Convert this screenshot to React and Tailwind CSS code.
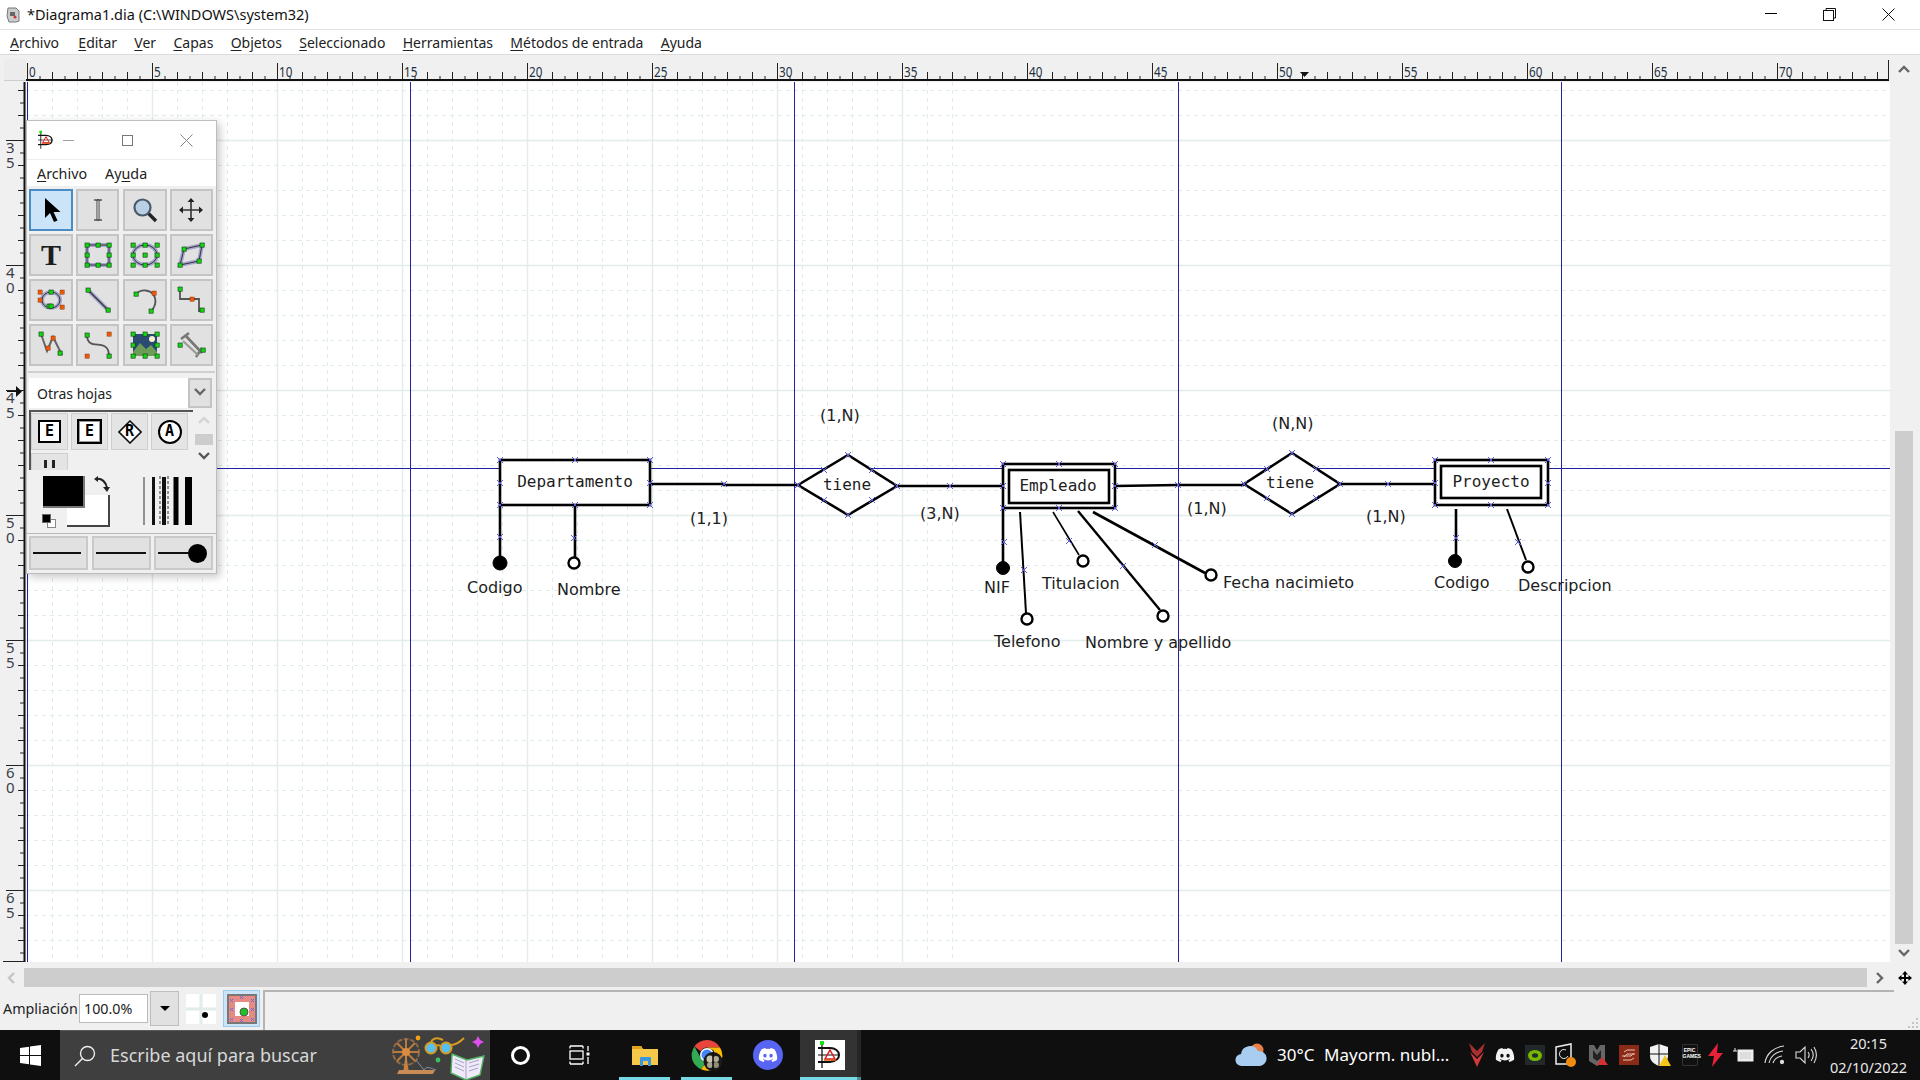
import React from "react";
import { FaDiscord } from "react-icons/fa";

const UI = "font-['Noto_Sans','Open_Sans',sans-serif]";
const U = ({ children }) => <span className="underline underline-offset-2">{children}</span>;

const range = (n, f) => Array.from({ length: n }, (_, i) => f(i));

function TopRuler() {
  return (
    <svg className="block" width="1864" height="23" viewBox="26 59 1864 23">
      {range(150, (i) => {
        const x = 27.5 + i * 12.5;
        if (x > 1888) return null;
        const top = i % 10 === 0 ? 63 : i % 2 === 0 ? 72 : 76;
        return <line key={i} x1={x} x2={x} y1={top} y2={80} stroke="#222" strokeWidth="1" />;
      })}
      <line x1="26" x2="1889" y1="80" y2="80" stroke="#111" strokeWidth="2" />
      <line x1="1888.5" x2="1888.5" y1="60" y2="80" stroke="#222" strokeWidth="1" />
      {range(15, (i) => {
        const s = String(i * 5);
        return (
          <text key={i} x={29 + i * 125} y={77} fontFamily="'Noto Sans',sans-serif" fontSize="15" fill="#23303f" textLength={s.length * 6.7} lengthAdjust="spacingAndGlyphs">
            {s}
          </text>
        );
      })}
      <path d="M1300 72h9l-4.500 5z" fill="#111" />
    </svg>
  );
}

function LeftRuler() {
  const labels = [["3", "5", 140], ["4", "0", 265], ["4", "5", 390], ["5", "0", 515], ["5", "5", 640], ["6", "0", 765], ["6", "5", 890]];
  return (
    <svg className="block" width="26" height="880" viewBox="0 82 26 880">
      <line x1="24.5" x2="24.5" y1="82" y2="962" stroke="#111" strokeWidth="2" />
      {range(72, (i) => {
        const y = 90 + i * 12.5;
        if (y > 961) return null;
        const major = Math.abs((y - 15) % 125) < 0.01;
        const even = i % 2 === 0;
        return <line key={i} x1={major ? 6 : even ? 18 : 20} x2={24} y1={y + 0.5} y2={y + 0.5} stroke="#222" strokeWidth="1" />;
      })}
      {labels.map(([a, b, y]) => (
        <g key={y} fontFamily="'Noto Sans',sans-serif" fontSize="15" fill="#3a3f4a">
          <text x="6" y={y + 13}>{a}</text>
          <text x="6" y={y + 28}>{b}</text>
        </g>
      ))}
      <path d="M7 391.5h10" stroke="#111" />
      <path d="M16 386l6 5.500-6 5.500z" fill="#111" />
      <line x1="3" x2="24" y1="961.5" y2="961.5" stroke="#222" />
    </svg>
  );
}

const X = ({ x, y }) => (
  <path d={`M${x - 3} ${y - 3}l6 6M${x + 3} ${y - 3}l-6 6`} stroke="#5a5ad8" strokeWidth="1" fill="none" />
);

function Diagram() {
  const marks = [[500,460],[575,460],[650,460],[500,483],[650,483],[500,505],[575,505],[650,505],[500,537],[574,538],[724,484],[798,485],[848,455],[824,470],[872,470],[897,486],[824,500],[872,500],[848,515],[950,486],
    [1003,464],[1059,464],[1115,464],[1003,486],[1115,486],[1003,508],[1059,508],[1115,508],[1178,485],[1244,484],[1292,453],[1267,469],[1316,469],[1340,484],[1267,498],[1316,498],[1292,514],[1388,484],
    [1435,460],[1491,460],[1548,460],[1435,483],[1548,483],[1435,505],[1491,505],[1548,505],[1004,542],[1024,570],[1069,541],[1123,566],[1155,545],[1456,538],[1518,542]];
  const texts = [
    ["(1,N)", 820, 421],["(1,1)", 690, 524],["(3,N)", 920, 519],["Codigo", 467, 593],["Nombre", 557, 595],
    ["NIF", 984, 593],["Titulacion", 1042, 589],["Fecha nacimieto", 1223, 588],["Telefono", 994, 647],["Nombre y apellido", 1085, 648],
    ["Codigo", 1434, 588],["Descripcion", 1518, 591],["(N,N)", 1272, 429],["(1,N)", 1187, 514],["(1,N)", 1366, 522],
  ];
  const mono = [["Departamento", 575, 487],["tiene", 847, 490],["Empleado", 1058, 491],["tiene", 1290, 488],["Proyecto", 1491, 487]];
  return (
    <svg className="block bg-white" width="1864" height="880" viewBox="26 82 1864 880">
      {range(38, (i) => {
        const x = 27.5 + i * 25;
        const major = i % 5 === 0;
        return <line key={"v" + i} x1={x} x2={x} y1="82" y2="962" stroke={major ? "#e2ecea" : "#e0ece8"} strokeWidth={major ? 1.4 : 1} strokeDasharray={major ? undefined : "4 4"} />;
      })}
      {range(36, (i) => {
        const y = 90.5 + i * 25;
        const major = i % 5 === 2;
        return <line key={"h" + i} x1="26" x2="1890" y1={y} y2={y} stroke={major ? "#e2ecea" : "#e0ece8"} strokeWidth={major ? 1.4 : 1} strokeDasharray={major ? undefined : "4 4"} />;
      })}
      <g stroke="#22229e" strokeWidth="1">
        <line x1="27.5" x2="27.5" y1="82" y2="962" />
        <line x1="410.5" x2="410.5" y1="82" y2="962" />
        <line x1="794.5" x2="794.5" y1="82" y2="962" />
        <line x1="1178.5" x2="1178.5" y1="82" y2="962" />
        <line x1="1561.5" x2="1561.5" y1="82" y2="962" />
        <line x1="26" x2="1890" y1="468.5" y2="468.5" />
      </g>
      <g fill="none" stroke="#000" strokeWidth="2.6">
        <rect x="500" y="460" width="150" height="45" fill="#fff" />
        <path d="M650 484h74v1h74" />
        <path d="M798 485l50-30 49 31-49 29z" fill="#fff" />
        <path d="M897 486h106" />
        <rect x="1003" y="464" width="112" height="44" fill="#fff" />
        <rect x="1009" y="470" width="100" height="33" fill="#fff" />
        <path d="M1115 486l63-1h66" />
        <path d="M1244 484l48-31 48 31-48 30z" fill="#fff" />
        <path d="M1340 484h95" />
        <rect x="1435" y="460" width="113" height="45" fill="#fff" />
        <rect x="1441" y="466" width="100" height="32" fill="#fff" />
        <path d="M500 505v55M575 505v52" />
        <path d="M1003 508v55" />
        <path d="M1020 512l6 101" strokeWidth="2" />
        <path d="M1053 512l26 43" strokeWidth="1.6" />
        <path d="M1078 511l82 99" strokeWidth="2.4" />
        <path d="M1093 512l112 61" />
        <path d="M1456 509v47" />
        <path d="M1507 509l19 51" strokeWidth="2" />
      </g>
      <g fill="#000" stroke="#000">
        <circle cx="500" cy="563" r="7" />
        <circle cx="1003" cy="568" r="6.5" />
        <circle cx="1455" cy="561" r="6.5" />
      </g>
      <g fill="#fff" stroke="#000" strokeWidth="2.4">
        <circle cx="574" cy="563" r="5.5" />
        <circle cx="1027" cy="619" r="5.5" />
        <circle cx="1083" cy="561" r="5.5" />
        <circle cx="1163" cy="616" r="5.5" />
        <circle cx="1211" cy="575" r="5.5" />
        <circle cx="1528" cy="567" r="5.5" />
      </g>
      {marks.map(([x, y], i) => <X key={i} x={x} y={y} />)}
      <g fontFamily="'DejaVu Sans',sans-serif" fontSize="16" fill="#1d1d1d">
        {texts.map(([t, x, y], i) => <text key={i} x={x} y={y}>{t}</text>)}
      </g>
      <g fontFamily="'DejaVu Sans Mono',monospace" fontSize="16" fill="#1d1d1d" textAnchor="middle">
        {mono.map(([t, x, y], i) => <text key={i} x={x} y={y}>{t}</text>)}
      </g>
    </svg>
  );
}

const G = ({ x, y, c = "#14d414" }) => <rect x={x - 2} y={y - 2} width="4.2" height="4.2" fill={c} stroke="#0a3a0a" strokeWidth="0.6" />;
const O = ({ x, y }) => <rect x={x - 2} y={y - 2} width="4.2" height="4.2" fill="#e8590c" stroke="#7a2e05" strokeWidth="0.4" />;
const Blur = ({ d }) => <path d={d} fill="none" stroke="#6a6ac0" strokeWidth="4" opacity="0.5" />;

const icons = [
  <svg width="30" height="30" viewBox="0 0 30 30"><path d="M9 3v20l5-5 4 9 3.500-1.500-4-8.500h7z" fill="#000" /></svg>,
  <svg width="30" height="30" viewBox="0 0 30 30"><path d="M11 5h8M11 25h8" stroke="#111" strokeWidth="1.2" fill="none" /><path d="M14 5h2v20h-2z" fill="#fff" stroke="#111" strokeWidth="0.8" /></svg>,
  <svg width="30" height="30" viewBox="0 0 30 30"><path d="M18 18l8 8" stroke="#222" strokeWidth="3.4" /><circle cx="12.5" cy="12.5" r="8" fill="#b9cfe6" stroke="#4a5a6a" strokeWidth="2.2" /></svg>,
  <svg width="30" height="30" viewBox="0 0 30 30"><path d="M15 6v18M6 15h18" stroke="#333" strokeWidth="1.6" /><path d="M15 3l-3.500 4h7zM15 27l-3.500-4h7zM3 15l4-3.500v7zM27 15l-4-3.500v7z" fill="#222" /></svg>,
  <span className="font-['Liberation_Serif',serif] font-bold text-[30px] leading-none text-[#1d1d1d]">T</span>,
  <svg width="30" height="30" viewBox="0 0 30 30"><Blur d="M4 5h22v20H4z" /><path d="M4 5h22v20H4z" fill="none" stroke="#333" strokeWidth="1" />{[[4,5],[15,5],[26,5],[4,15],[26,15],[4,25],[15,25],[26,25]].map(([x,y],i)=><G key={i} x={x} y={y}/>)}</svg>,
  <svg width="30" height="30" viewBox="0 0 30 30"><ellipse cx="15" cy="15" rx="12" ry="10" fill="none" stroke="#6a6ac0" strokeWidth="4" opacity="0.5"/><ellipse cx="15" cy="15" rx="12" ry="10" fill="none" stroke="#333"/>{[[3,5],[15,5],[27,5],[3,15],[15,15],[27,15],[3,25],[15,25],[27,25]].map(([x,y],i)=><G key={i} x={x} y={y}/>)}</svg>,
  <svg width="30" height="30" viewBox="0 0 30 30"><Blur d="M8 9l18-4-3 16-19 4z" /><path d="M8 9l18-4-3 16-19 4z" fill="none" stroke="#333"/>{[[8,9],[26,5],[23,21],[4,25]].map(([x,y],i)=><G key={i} x={x} y={y}/>)}</svg>,
  <svg width="30" height="30" viewBox="0 0 30 30"><ellipse cx="15" cy="15" rx="9" ry="8" fill="none" stroke="#6a6ac0" strokeWidth="4" opacity="0.5"/><ellipse cx="15" cy="15" rx="9" ry="8" fill="none" stroke="#333"/>{[[4,7],[26,7],[4,15],[26,22],[13,21]].map(([x,y],i)=> i===4?<G key={i} x={x} y={y}/>:<O key={i} x={x} y={y}/>)}<G x={15} y={7}/><G x={15} y={21}/></svg>,
  <svg width="30" height="30" viewBox="0 0 30 30"><Blur d="M5 5l20 20"/><path d="M5 5l20 20" stroke="#333" strokeWidth="1.2"/><G x={5} y={5}/><G x={25} y={25}/></svg>,
  <svg width="30" height="30" viewBox="0 0 30 30"><path d="M6 9c6-6 17-4 19 4s-3 11-3 13" fill="none" stroke="#555" strokeWidth="1.8"/><G x={6} y={9}/><O x={24} y={8}/><G x={21} y={26}/></svg>,
  <svg width="30" height="30" viewBox="0 0 30 30"><path d="M4 4v10h19v12h3" fill="none" stroke="#555" strokeWidth="1.8"/><G x={4} y={4}/><O x={16} y={14}/><G x={26} y={25}/></svg>,
  <svg width="30" height="30" viewBox="0 0 30 30"><path d="M5 4l6 17 6-14 9 18" fill="none" stroke="#666" strokeWidth="2"/><G x={5} y={4}/><O x={12} y={18}/><O x={17} y={8}/><G x={24} y={23}/></svg>,
  <svg width="30" height="30" viewBox="0 0 30 30"><path d="M4 5c0 18 22 1 22 21" fill="none" stroke="#555" strokeWidth="1.8"/><G x={4} y={5}/><O x={26} y={4}/><O x={4} y={26}/><G x={26} y={26}/></svg>,
  <svg width="30" height="30" viewBox="0 0 30 30"><rect x="3" y="4" width="24" height="22" fill="#2a4a72"/><circle cx="22" cy="9" r="3" fill="#f4f0d0"/><path d="M3 22l7-9 6 6 5-4 6 7v4H3z" fill="#6c9c58"/>{[[3,4],[15,4],[27,4],[3,15],[27,15],[3,26],[15,26],[27,26]].map(([x,y],i)=><G key={i} x={x} y={y}/>)}</svg>,
  <svg width="30" height="30" viewBox="0 0 30 30"><path d="M9 5l17 18M13 3l-8 6M26 18l-6 9" stroke="#777" strokeWidth="2.6" fill="none"/><path d="M7 11l15 14" stroke="#999" strokeWidth="2.2"/><G x={4} y={15}/><G x={27} y={20}/></svg>,
];

const Chev = ({ dir = "down", color = "#555", className = "" }) => {
  const d = { up: "M1 7l5-5 5 5", down: "M1 2l5 5 5-5", left: "M7 1L2 6l5 5", right: "M2 1l5 5-5 5" }[dir];
  return (
    <svg width="12" height="12" viewBox="0 0 12 12" className={className}>
      <path d={d} fill="none" stroke={color} strokeWidth="2.4" />
    </svg>
  );
};

const DiaIcon = ({ size = 30, white }) => (
  <svg width={size} height={size} viewBox="0 0 30 30" className={white ? "bg-white" : ""}>
    <path d="M7 3v25" stroke="#666" strokeWidth="2" />
    <path d="M3 8h12c11 0 13 13 0 14H3" fill="none" stroke="#111" strokeWidth="2" />
    <path d="M3 15h22" stroke="#111" strokeWidth="1" />
    <path d="M15 10l5 9h-10z" fill="none" stroke="#e01818" strokeWidth="1.5" />
    <path d="M9 20h12" stroke="#e05a18" strokeWidth="1.5" />
    <rect x="5" y="1" width="4" height="4" fill="#18e018" />
  </svg>
);

const SheetBtn = ({ children }) => <div className="bg-[#e4e4e4] border border-[#cfcfcf] flex items-center justify-center">{children}</div>;
const LineBtn = ({ children }) => <div className="w-[59px] h-[34px] bg-[#e1e1e1] border-2 border-[#c9c9c9] flex items-center justify-center">{children}</div>;
const MONO = "font-['DejaVu_Sans_Mono',monospace] font-bold text-[15px] text-black";

function Toolbox() {
  return (
    <div className={`absolute left-[26px] top-[120px] w-[191px] h-[454px] bg-[#f0f0f0] border border-[#bdbdbd] shadow-[3px_3px_8px_rgba(0,0,0,0.22)] flex flex-col ${UI} text-[14.3px] text-[#222]`}>
      <div className="h-[38px] bg-white flex items-center relative shrink-0">
        <div className="ml-[9px]"><DiaIcon size={20} /></div>
        <div className="w-[11px] h-px bg-[#a0a0a0] ml-[7px]" />
        <div className="absolute left-[95px] top-[14px] w-[11px] h-[11px] border border-[#777]" />
        <svg width="13" height="13" viewBox="0 0 13 13" className="absolute left-[153px] top-[13px]"><path d="M0.5 0.5l12 12M12.5 0.5l-12 12" stroke="#888" /></svg>
      </div>
      <div className="h-[27px] bg-white flex items-center gap-[18px] pl-[10px] pt-[2px] shrink-0 border-t border-[#eee]">
        <span><U>A</U>rchivo</span>
        <span>Ay<U>u</U>da</span>
      </div>
      <div className="grid grid-cols-[44px_43px_44px_43px] grid-rows-[42px_42px_42px_42px] gap-y-[3px] justify-between w-[184px] ml-[2px] mt-[3px] shrink-0">
        {icons.map((ic, i) => (
          <div key={i} className={`flex items-center justify-center border-2 ${i === 0 ? "bg-[#cce4f7] border-[#4a8cc4]" : "bg-[#e1e1e1] border-[#c4c4c4]"}`}>{ic}</div>
        ))}
      </div>
      <div className="h-[2px] mt-[5px] mx-[1px] bg-[#cfcfcf] shrink-0" />
      <div className="flex h-[30px] mt-[5px] ml-[2px] w-[183px] shrink-0">
        <div className="w-[159px] bg-white flex items-center pl-[8px] text-[14px]">Otras hojas</div>
        <div className="w-[24px] bg-[#e1e1e1] border-2 border-[#c4c4c4] flex items-center justify-center"><Chev color="#666" /></div>
      </div>
      <div className="flex mt-[2px] ml-[2px] h-[60px] shrink-0 overflow-hidden">
        <div className="w-[164px] border-l-2 border-t-2 border-[#555] pt-[1px] bg-[#f0f0f0] grid grid-cols-[37px_37px_37px_37px] gap-[3px] auto-rows-[37px] content-start">
          <SheetBtn><span className={`w-[23px] h-[23px] border-2 border-black bg-white flex items-center justify-center ${MONO}`}>E</span></SheetBtn>
          <SheetBtn><span className="w-[25px] h-[25px] border-2 border-black p-[1px] bg-[#999]"><span className={`w-full h-full bg-white flex items-center justify-center ${MONO}`}>E</span></span></SheetBtn>
          <SheetBtn><span className="relative w-[24px] h-[24px] flex items-center justify-center"><svg width="24" height="24" viewBox="0 0 24 24" className="absolute inset-0"><path d="M12 1l11 11-11 11L1 12z" fill="#fff" stroke="#111" strokeWidth="1.6" /></svg><span className={`relative ${MONO}`}>R</span></span></SheetBtn>
          <SheetBtn><span className={`w-[24px] h-[24px] rounded-full border-2 border-black bg-white flex items-center justify-center ${MONO}`}>A</span></SheetBtn>
          <SheetBtn><span className="flex gap-[5px] self-start mt-[6px]"><span className="w-[3px] h-[8px] bg-[#222]" /><span className="w-[3px] h-[8px] bg-[#222]" /></span></SheetBtn>
        </div>
        <div className="w-[18px] ml-[2px] flex flex-col items-center">
          <Chev dir="up" color="#d4d4d4" className="mt-[6px]" />
          <div className="w-[18px] h-[11px] bg-[#cdcdcd] mt-[6px]" />
          <Chev color="#555" className="mt-[6px]" />
        </div>
      </div>
      <div className="h-[64px] flex shrink-0 border-b border-[#bbb] relative bg-[#f0f0f0]">
        <div className="absolute left-[16px] top-[6px] w-[42px] h-[32px] bg-black border-r-2 border-b-2 border-[#777] z-10" />
        <div className="absolute left-[40px] top-[25px] w-[43px] h-[32px] bg-white border-r-2 border-b-2 border-[#444]" />
        <div className="absolute left-[15px] top-[44px] w-[9px] h-[9px] bg-black z-10 border border-[#666]" />
        <div className="absolute left-[20px] top-[49px] w-[9px] h-[9px] bg-white border border-[#888]" />
        <svg width="18" height="18" viewBox="0 0 18 18" className="absolute left-[66px] top-[5px]"><path d="M3 4c6-1 10 3 11 9" fill="none" stroke="#222" strokeWidth="2" /><path d="M1 4l4-3v6zM10 12h7l-3 5z" fill="#222" /></svg>
        <svg width="52" height="52" viewBox="0 0 52 52" className="absolute left-[116px] top-[6px]">
          <path d="M1 1v48" stroke="#333" />
          <path d="M10.5 1v48" stroke="#111" strokeWidth="3" />
          <path d="M21 1v48" stroke="#111" strokeWidth="4" />
          <path d="M17 0v50M25 0v50" stroke="#333" strokeDasharray="3 2" />
          <path d="M33 1v48" stroke="#000" strokeWidth="5" />
          <path d="M45.5 1v48" stroke="#000" strokeWidth="7" />
        </svg>
      </div>
      <div className="flex ml-[2px] mt-[2px] shrink-0 w-[184px] justify-between">
        <LineBtn><span className="w-[48px] h-[2.5px] bg-[#111] -ml-[3px]" /></LineBtn>
        <LineBtn><span className="w-[50px] h-[2.5px] bg-[#111]" /></LineBtn>
        <LineBtn><span className="flex items-center -ml-[3px]"><span className="w-[31px] h-[2.5px] bg-[#111]" /><span className="w-[19px] h-[19px] rounded-full bg-black -ml-[1px]" /></span></LineBtn>
      </div>
    </div>
  );
}

function Doodle() {
  return (
    <svg width="96" height="48" viewBox="0 0 96 48" className="shrink-0">
      <g stroke="#b97a3c" strokeWidth="2" fill="none">
        <circle cx="15" cy="20" r="13" strokeDasharray="5 1.500" stroke="#8a6a4a" />
        <path d="M15 7v26M2 20h26M6 11l18 18M24 11L6 29" />
      </g>
      <path d="M15 21l-3 20h6z" fill="#c9813f" />
      <circle cx="15" cy="20" r="4" fill="#d98b40" />
      <path d="M6 42h36l2-4H8z" fill="#c98a56" />
      <path d="M25 28l8 10M33 38c3-5 8-1 12 0" stroke="#8890a8" fill="none" />
      <circle cx="27" cy="6" r="2.4" fill="#f0a010" />
      <circle cx="47" cy="28" r="2.4" fill="#3cc060" />
      <circle cx="40" cy="16" r="5.5" fill="#58c0f0" stroke="#d89a20" strokeWidth="2" />
      <circle cx="55" cy="16" r="5.5" fill="#58c0f0" stroke="#d89a20" strokeWidth="2" />
      <path d="M45 14c1-1 3-1 4 0M40 10c3-5 8-4 12-2M60 13c5 0 9-3 13-7" stroke="#d89a20" strokeWidth="2" fill="none" />
      <path d="M87 4l2 4 4 2-4 2-2 4-2-4-4-2 4-2z" fill="#e050f0" />
      <path d="M61 22l15 6 17-4-4 19-14 5-15-7z" fill="#eeeaf8" stroke="#50b060" strokeWidth="1.4" />
      <path d="M75 28l0 19M64 27l9 4M64 31l9 4M64 35l9 4M78 31l10-3M78 35l10-3M78 39l9-3" stroke="#a8a0c8" strokeWidth="1" />
    </svg>
  );
}

const Chrome = () => (
  <svg width="32" height="32" viewBox="0 0 32 32">
    <path d="M16 1a15 15 0 0 1 13 7.500H16a7.500 7.500 0 0 0-6.500 3.800L3.500 7.500A15 15 0 0 1 16 1z" fill="#e8453c" />
    <path d="M3.500 7.500l6 11a7.500 7.500 0 0 0 6.500 4l-6 7.700A15 15 0 0 1 3.500 7.500z" fill="#34a853" />
    <path d="M29 8.500A15 15 0 0 1 10 30.200l6-7.700a7.500 7.500 0 0 0 6.500-11.200l-6.500-2.800z" fill="#fbbc05" />
    <circle cx="16" cy="16" r="7" fill="#fff" />
    <circle cx="16" cy="16" r="5.5" fill="#4285f4" />
    <circle cx="22" cy="22.500" r="9.5" fill="#1a1a1a" />
    <circle cx="19" cy="20" r="3.5" fill="#c9c4b0" /><circle cx="25" cy="20" r="3" fill="#b0ac98" /><circle cx="19" cy="26" r="3" fill="#a8a490" /><circle cx="25" cy="26" r="3" fill="#908c78" />
    <path d="M22 13v19" stroke="#111" strokeWidth="1.6" />
  </svg>
);

function Tray() {
  return (
    <>
      <svg width="18" height="26" viewBox="0 0 18 26"><path d="M1 1l8 8 8-8-3 9-5 5-5-5z" fill="#a83030" /><path d="M2 10l7 7 7-7-7 15z" fill="#d03a3a" /></svg>
      <FaDiscord size={20} color="#f2f2f2" />
      <div className="w-[20px] h-[20px] bg-[#23282a] flex items-center justify-center"><svg width="15" height="13" viewBox="0 0 15 13"><ellipse cx="8" cy="6.500" rx="7" ry="5.500" fill="#76b900" /><ellipse cx="8" cy="6.500" rx="3" ry="2.200" fill="#23282a" /></svg></div>
      <svg width="24" height="26" viewBox="0 0 24 26"><path d="M2 5l15-3v20H2z" fill="none" stroke="#eee" strokeWidth="1.5" /><path d="M12 8a4.500 4.500 0 1 0 2 6" fill="none" stroke="#eee" /><circle cx="17" cy="20" r="5" fill="#f08a10" /></svg>
      <svg width="22" height="26" viewBox="0 0 22 26"><path d="M2 3h5l3 5 3-5h5v16l-8 5-8-5z" fill="#666" /><path d="M6 8l4 5 4-5v8l-4 3-4-3z" fill="#222" /><path d="M15 15l6 8H10z" fill="#d83030" /></svg>
      <div className="w-[20px] h-[20px] bg-[#8c2a18] flex items-center justify-center"><svg width="16" height="12" viewBox="0 0 16 12"><path d="M1 7h9l3-3M14 5H6L3 8" stroke="#e8c0b0" strokeWidth="1" fill="none" /><path d="M3 3l3-2h8M13 9l-3 2H2" stroke="#e8c0b0" fill="none" /></svg></div>
      <svg width="24" height="26" viewBox="0 0 24 26"><path d="M11 2l9 3v9c0 5-4 8-9 10-5-2-9-5-9-10V5z" fill="#f2f2f2" /><path d="M11 2v22M2 12h18" stroke="#111" /><path d="M17 13l6 11H11z" fill="#f5c518" /></svg>
      <div className="w-[16px] h-[22px] bg-[#111] border border-[#333] text-[5px] leading-[6px] text-white text-center font-['Liberation_Sans',sans-serif] font-bold pt-[2px] rounded-[1px]">EPIC<br />GAMES</div>
      <svg width="17" height="26" viewBox="0 0 17 26"><path d="M11 1L1 14h6l-2 11 11-14h-6z" fill="#e8203a" /></svg>
      <svg width="21" height="16" viewBox="0 0 21 16"><rect x="5" y="3" width="15" height="11" fill="#eee" stroke="#eee" /><rect x="7" y="5" width="11" height="7" fill="#ddd" /><path d="M0 4h4M2 1v3" stroke="#eee" /></svg>
      <svg width="22" height="22" viewBox="0 0 22 22" fill="none" stroke="#ddd" strokeWidth="1.1"><path d="M1 19C2 10 10 3 20 2M5 19c1-6 6-11 14-12M9 19c1-3 4-6 9-7" /><circle cx="18" cy="18" r="1.6" fill="#ddd" /></svg>
      <svg width="22" height="22" viewBox="0 0 22 22" fill="none" stroke="#ddd" strokeWidth="1.1"><path d="M1 8h4l5-5v16l-5-5H1z" /><path d="M13 8c1.500 2 1.500 4 0 6M16 5c3 4 3 8 0 12M19 3c3 5 3 11 0 16" /></svg>
    </>
  );
}

export default function App() {
  const menus = [["A", "rchivo"], ["E", "ditar"], ["V", "er"], ["C", "apas"], ["O", "bjetos"], ["S", "eleccionado"], ["H", "erramientas"], ["M", "étodos de entrada"], ["A", "yuda"]];
  return (
    <div className={`relative w-[1920px] h-[1080px] overflow-hidden flex flex-col bg-[#f0f0f0] ${UI} text-[#222]`}>
      <div className="h-[30px] bg-white flex items-center border-b border-[#e2e2e2] shrink-0 relative">
        <svg width="16" height="16" viewBox="0 0 16 16" className="ml-[5px]"><path d="M3 1h8l3 3v10l-3 1H4L2 9z" fill="#ccc" stroke="#777" /><rect x="5" y="5" width="5" height="4" fill="#666" /><circle cx="10" cy="10" r="1.5" fill="#d03030" /></svg>
        <span className="ml-[6px] text-[14.5px] text-[#111]">*Diagrama1.dia (C:\WINDOWS\system32)</span>
        <div className="absolute left-[1765px] top-[13px] w-[12px] h-px bg-black" />
        <svg width="13" height="13" viewBox="0 0 13 13" className="absolute left-[1823px] top-[8px]"><rect x="0.5" y="2.5" width="10" height="10" fill="none" stroke="#111" /><path d="M3 2.500V.5h9.500V10h-2" fill="none" stroke="#111" /></svg>
        <svg width="13" height="13" viewBox="0 0 13 13" className="absolute left-[1882px] top-[8px]"><path d="M.5.5l12 12M12.500.5l-12 12" stroke="#111" /></svg>
      </div>
      <div className="h-[25px] bg-white flex items-center gap-[17.3px] pl-[10px] pt-[1px] border-b border-[#dcdcdc] text-[14px] text-[#222] shrink-0">
        {menus.map(([a, b], i) => <span key={i} className="first:mr-[2px]"><U>{a}</U>{b}</span>)}
      </div>
      <div className="flex h-[911px] pt-[4px] shrink-0">
        <div className="w-[1890px] flex flex-col">
          <div className="flex h-[23px]">
            <div className="w-[26px] h-[23px] pl-[4px]"><div className="h-[22px] border-b border-[#ccc] bg-[#ececec]" /></div>
            <TopRuler />
          </div>
          <div className="flex h-[880px]">
            <LeftRuler />
            <Diagram />
          </div>
        </div>
        <div className="w-[30px] relative">
          <Chev dir="up" color="#666" className="absolute left-[8px] top-[6px]" />
          <div className="absolute left-[5px] top-[372px] w-[18px] h-[513px] bg-[#cdcdcd]" />
          <Chev color="#666" className="absolute left-[8px] top-[889px]" />
        </div>
      </div>
      <div className="h-[24px] flex items-center pb-[1px] shrink-0 relative">
        <Chev dir="left" color="#c4c4c4" className="ml-[7px]" />
        <div className="ml-[5px] w-[1843px] h-[19px] bg-[#cdcdcd]" />
        <Chev dir="right" color="#666" className="ml-[8px]" />
        <svg width="14" height="14" viewBox="0 0 14 14" className="ml-[11px]"><path d="M7 1v12M1 7h12" stroke="#000" strokeWidth="2" /><path d="M7 0L4 3.500h6zM7 14l-3-3.500h6zM0 7l3.500-3v6zM14 7l-3.500-3v6z" fill="#000" /></svg>
      </div>
      <div className="h-[40px] flex items-center pb-[3px] shrink-0 text-[14.3px] relative">
        <span className="ml-[3px] w-[75px] text-[#222] whitespace-nowrap">Ampliación</span>
        <div className="ml-[1px] w-[69px] h-[29px] bg-white border border-[#bbb] flex items-center pl-[4px]">100.0%</div>
        <div className="ml-[2px] w-[29px] h-[35px] bg-[#e1e1e1] border border-[#bdbdbd] flex items-center justify-center">
          <div className="w-0 h-0 border-l-[5px] border-r-[5px] border-t-[5px] border-l-transparent border-r-transparent border-t-black" />
        </div>
        <svg width="30" height="30" viewBox="0 0 30 30" className="ml-[7px]"><rect width="30" height="30" fill="#fff" /><path d="M0 15h30M15 0v30" stroke="#e2ecea" strokeWidth="3" /><circle cx="19" cy="21" r="3" fill="#000" /></svg>
        <div className="ml-[7px] w-[37px] h-[37px] bg-[#cce4f7] border border-[#9ccbee] flex items-center justify-center">
          <svg width="30" height="30" viewBox="0 0 30 30">
            <rect x="1" y="1" width="28" height="28" fill="#e88a84" stroke="#777" strokeWidth="2" />
            <path d="M3 5l3 3M6 5l-3 3M13 2l3 3M16 2l-3 3M24 5l3 3M27 5l-3 3M3 14l3 3M6 14l-3 3M24 14l3 3M27 14l-3 3M3 24l3 3M6 24l-3 3M13 25l3 3M16 25l-3 3M24 24l3 3M27 24l-3 3" stroke="#6a6ad8" />
            <rect x="8" y="8" width="14" height="14" fill="#fff" />
            <circle cx="17" cy="18" r="4" fill="#22c022" stroke="#555" />
          </svg>
        </div>
        <div className="ml-[3px] w-[1631px] h-[40px] self-start border-l-2 border-t-2 border-[#b4b4b4]" />
        <div className="absolute right-[2px] bottom-[2px] grid grid-cols-3 gap-[2px]">
          {[0,0,1,0,1,1,1,1,1].map((v, i) => <span key={i} className={`w-[2px] h-[2px] ${v ? "bg-[#c4c4c4]" : ""}`} />)}
        </div>
      </div>
      <div className="h-[50px] bg-[#0f0f0f] flex items-stretch shrink-0 relative">
        <div className="w-[60px] shrink-0 flex items-center justify-center">
          <svg width="21" height="21" viewBox="0 0 21 21"><path d="M0 3l9-1.300V10H0zM10 1.500L21 0v10H10zM0 11h9v8.300L0 18zM10 11h11v10l-11-1.500z" fill="#fff" /></svg>
        </div>
        <div className="w-[430px] shrink-0 bg-[#3f3f3f] border-t border-[#5a5a5a] flex items-center pl-[14px] pr-[3px]">
          <svg width="22" height="22" viewBox="0 0 22 22" fill="none" stroke="#eee" strokeWidth="1.4"><circle cx="13.5" cy="8.5" r="7" /><path d="M8.500 13.500L1 21" /></svg>
          <span className="ml-[14px] text-[18px] text-[#d8d8d8] flex-1 whitespace-nowrap">Escribe aquí para buscar</span>
          <Doodle />
        </div>
        <div className="w-[60px] shrink-0 flex items-center justify-center"><div className="w-[19px] h-[19px] rounded-full border-[3px] border-white" /></div>
        <div className="w-[60px] shrink-0 flex items-center justify-center">
          <svg width="22" height="20" viewBox="0 0 22 20" fill="none" stroke="#fff" strokeWidth="1.3"><path d="M1 1h13M1 19h13M1 3.500V1M14 3.500V1M1 19v-2.500M14 19v-2.500" /><rect x="1" y="6" width="13" height="8" /><path d="M19 1v5M19 12v7" /><rect x="17.500" y="7.500" width="3" height="3" fill="#fff" stroke="none" /></svg>
        </div>
        <div className="w-[70px] shrink-0 flex items-center justify-center relative">
          <svg width="28" height="24" viewBox="0 0 28 24"><path d="M1 3h9l2 3h15v16H1z" fill="#f5c84a" /><path d="M1 3h9l2 3H1z" fill="#e3a21a" /><path d="M9 23v-8a1 1 0 0 1 1-1h9a1 1 0 0 1 1 1v8h-3v-5h-5v5z" fill="#3a96dd" /></svg>
          <div className="absolute left-[9px] right-[10px] bottom-0 h-[3px] bg-[#76d9e6]" />
        </div>
        <div className="w-[53px] shrink-0 flex items-center justify-center relative">
          <Chrome />
          <div className="absolute left-[1px] right-[1px] bottom-0 h-[3px] bg-[#76d9e6]" />
        </div>
        <div className="w-[67px] shrink-0 pl-[3px] flex items-center justify-center">
          <div className="w-[30px] h-[30px] rounded-full bg-[#5865f2] flex items-center justify-center"><FaDiscord size={20} color="#fff" /></div>
        </div>
        <div className="w-[57px] shrink-0 pl-[3px] bg-[#333] flex items-center justify-center relative">
          <DiaIcon white />
          <div className="absolute left-0 right-0 bottom-0 h-[3px] bg-[#76d9e6]" />
        </div>
        <div className="w-[4px] shrink-0 bg-[#262626] relative"><div className="absolute left-0 right-0 bottom-0 h-[3px] bg-[#4e8a92]" /></div>
        <div className="w-[587px] shrink-0 flex items-center justify-end">
          <svg width="32" height="26" viewBox="0 0 32 26"><circle cx="22" cy="8" r="6.500" fill="#e8824a" /><path d="M7 24a6 6 0 0 1-1-12 9 9 0 0 1 17-3 7.500 7.500 0 0 1 2 15z" fill="#a9cdf0" /></svg>
          <span className="ml-[10px] text-[17px] text-white w-[47px] whitespace-nowrap">30°C</span>
          <span className="text-[17px] text-white whitespace-nowrap w-[124px]">Mayorm. nubl...</span>
        </div>
        <div className="flex items-center justify-between w-[349px] shrink-0 ml-[20px]"><Tray /></div>
        <div className="flex-1 flex flex-col items-center justify-center text-[14.5px] leading-[24px] text-[#e8e8e8]">
          <span>20:15</span>
          <span>02/10/2022</span>
        </div>
      </div>
      <Toolbox />
    </div>
  );
}
